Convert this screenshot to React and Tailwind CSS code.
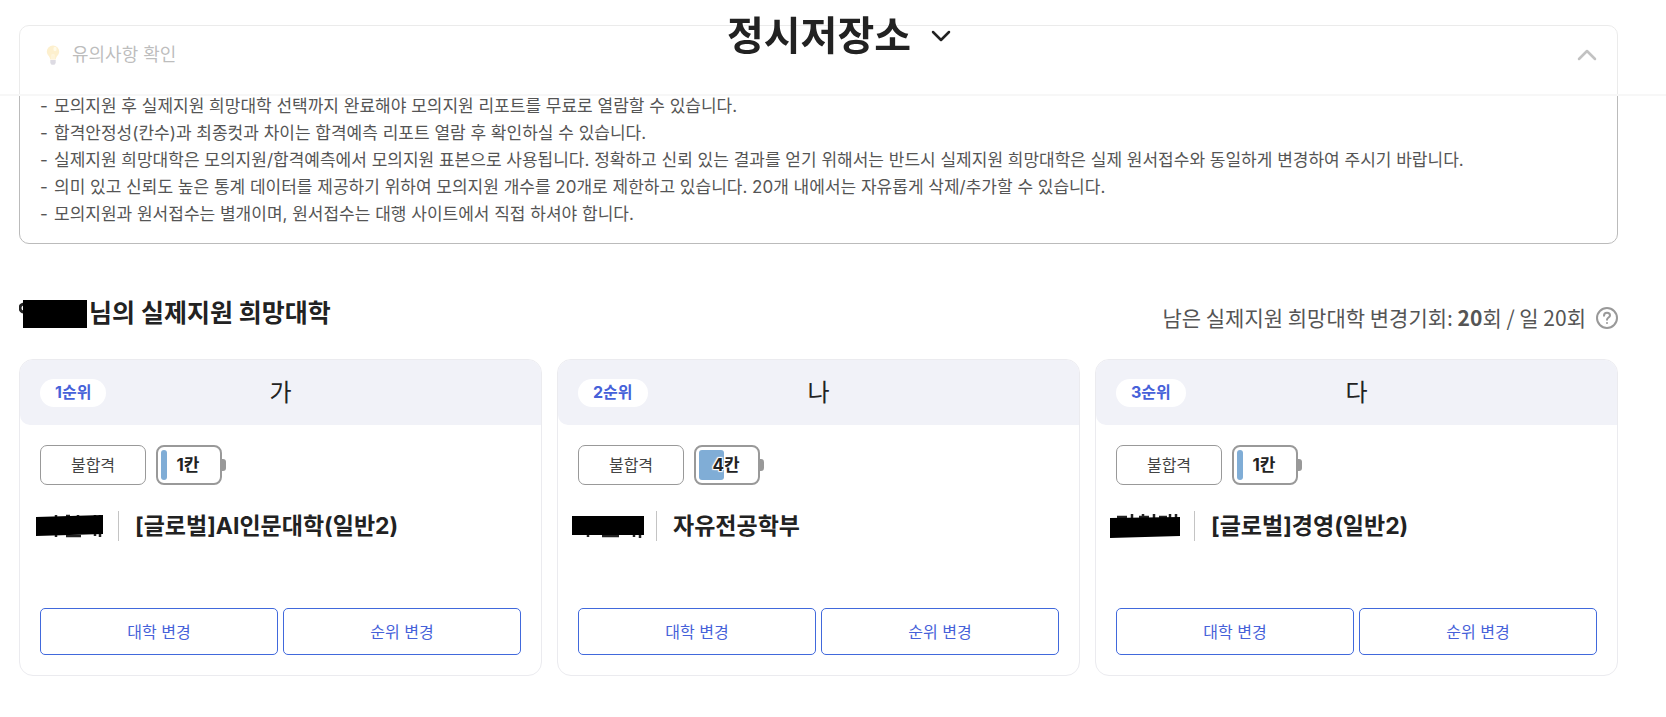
import { useState } from 'react'

const notices = [
  '모의지원 후 실제지원 희망대학 선택까지 완료해야 모의지원 리포트를 무료로 열람할 수 있습니다.',
  '합격안정성(칸수)과 최종컷과 차이는 합격예측 리포트 열람 후 확인하실 수 있습니다.',
  '실제지원 희망대학은 모의지원/합격예측에서 모의지원 표본으로 사용됩니다. 정확하고 신뢰 있는 결과를 얻기 위해서는 반드시 실제지원 희망대학은 실제 원서접수와 동일하게 변경하여 주시기 바랍니다.',
  '의미 있고 신뢰도 높은 통계 데이터를 제공하기 위하여 모의지원 개수를 20개로 제한하고 있습니다. 20개 내에서는 자유롭게 삭제/추가할 수 있습니다.',
  '모의지원과 원서접수는 별개이며, 원서접수는 대행 사이트에서 직접 하셔야 합니다.',
]

const choices = [
  {
    rank: 1,
    group: '가',
    result: '불합격',
    level: 1,
    fill: 6,
    major: '[글로벌]AI인문대학(일반2)',
    mask: '0,8 67,6 67,25 0,27',
    marks: 'M20 6v4M30 7h4M42 6v4M59 6v4M64 6v4M20 24v4M30 27h15M59 23v4M64 23v5',
  },
  {
    rank: 2,
    group: '나',
    result: '불합격',
    level: 4,
    fill: 25,
    major: '자유전공학부',
    mask: '-2,7 70,7 70,26 -2,26',
    marks: 'M14 25v3M28 27h17M60 25v3M66 25v4',
  },
  {
    rank: 3,
    group: '다',
    result: '불합격',
    level: 1,
    fill: 6,
    major: '[글로벌]경영(일반2)',
    mask: '-2,9 68,8 68,27 -2,29',
    marks: 'M5 8h10M20 5v5M27 8h10M31 5v3M42 5v5M47 8h8M58 5v5M64 5v5',
  },
]

function Bulb() {
  return (
    <svg viewBox="0 0 14 20" className="h-5 w-[14px]" aria-hidden="true">
      <path d="M7 0.500a6 6 0 0 0-6.200 6c0 3.400 3 4.600 3.400 8h5.600c.4-3.400 3.400-4.600 3.400-8a6 6 0 0 0-6.200-6z" fill="#f9cb5c" />
      <ellipse cx="9" cy="4" rx="1.600" ry="2.200" fill="#fff0b5" />
      <path d="M6 14V9.500l1 .8 1-.8V14" fill="none" stroke="#fde7a4" />
      <path d="M4.300 15h5.400v3L8.500 19.700h-3L4.300 18z" fill="#8d88a0" />
    </svg>
  )
}

function Chevron({ up, className }) {
  return (
    <svg viewBox="0 0 20 12" className={className} fill="none" stroke="currentColor" strokeLinecap="round" strokeLinejoin="round" aria-hidden="true">
      <path d={up ? 'M2 10l8-8 8 8' : 'M2 2l8 8 8-8'} />
    </svg>
  )
}

function Battery({ level, fill }) {
  return (
    <div className="flex items-center">
      <div className="relative flex h-10 w-[66px] items-center rounded-lg border-2 border-[#999] p-[3px]">
        <div className="h-[30px] rounded-[3px] bg-[#80add6]" style={{ width: fill }} />
        <span className="absolute inset-0 flex items-center justify-center pt-0.5 pr-0.5 text-[17px] font-bold text-[#222] [text-shadow:1px_1px_1px_#fff,-1px_-1px_1px_#fff,1px_-1px_1px_#fff,-1px_1px_1px_#fff]">
          {level}칸
        </span>
      </div>
      <div className="h-3 w-1 rounded-r-[3px] bg-[#999]" />
    </div>
  )
}

function ChoiceCard({ choice }) {
  return (
    <li className="overflow-hidden rounded-[14px] border border-[#ebebef] bg-white">
      <div className="grid h-[65px] grid-cols-[1fr_auto_1fr] items-center rounded-bl-[10px] bg-[#f1f2f8] px-5">
        <span className="flex h-7 items-center justify-self-start rounded-full bg-white px-[15px] pb-0.5 text-base font-bold text-[#4661d9]">
          {choice.rank}순위
        </span>
        <span className="text-2xl text-[#222]">{choice.group}</span>
      </div>
      <div className="px-5 py-5">
        <div className="flex items-center gap-[10px]">
          <span className="flex h-10 w-[106px] items-center justify-center rounded-[7px] border border-[#999] text-base text-[#444]">
            {choice.result}
          </span>
          <Battery level={choice.level} fill={choice.fill} />
        </div>
        <div className="mt-[26px] flex h-[30px] items-center">
          <svg viewBox="0 0 70 34" className="-ml-1 h-[34px] w-[70px] overflow-visible" aria-hidden="true">
            <path d={choice.marks} stroke="#222" strokeWidth="2.500" />
            <polygon points={choice.mask} fill="#000" />
          </svg>
          <span className="ml-3 h-[30px] w-px bg-[#c4c4c4]" />
          <strong className="ml-4 text-[23px] font-bold text-[#222]">{choice.major}</strong>
        </div>
        <div className="mt-[67px] grid grid-cols-2 gap-[5px]">
          <button type="button" className="h-[47px] rounded-[5px] border border-[#4169dc] text-base text-[#4661d9]">
            대학 변경
          </button>
          <button type="button" className="h-[47px] rounded-[5px] border border-[#4169dc] text-base text-[#4661d9]">
            순위 변경
          </button>
        </div>
      </div>
    </li>
  )
}

export default function App() {
  const [open, setOpen] = useState(true)

  return (
    <div className="min-h-screen bg-white font-['Inter','Noto_Sans_CJK_KR',sans-serif] text-[#222]">
      <header className="fixed inset-x-0 top-0 z-10 flex h-24 justify-center border-b-2 border-[#f7f7f7] bg-white/70 pt-2 pl-3">
        <button type="button" className="flex h-14 items-center gap-5">
          <h1 className="text-[40px] font-bold">정시저장소</h1>
          <Chevron className="h-3 w-5 stroke-[2.5]" />
        </button>
      </header>

      <main className="pt-[25px] pr-12 pl-[19px]">
        <section className="rounded-[10px] border border-[#bbb] pb-[15px]">
          <button
            type="button"
            aria-expanded={open}
            onClick={() => setOpen(!open)}
            className="flex h-[58px] w-full items-center pr-5 pl-[26px]"
          >
            <Bulb />
            <span className="ml-3 text-lg text-[#222]">유의사항 확인</span>
            <Chevron up={open} className="ml-auto h-3 w-5 stroke-[2.5] text-[#333]" />
          </button>
          {open && (
            <ul className="mt-[9px] px-5 text-[17px] leading-[27px] text-[#555]">
              {notices.map((notice) => (
                <li key={notice} className="flex">
                  <span className="w-[14px] shrink-0">-</span>
                  {notice}
                </li>
              ))}
            </ul>
          )}
        </section>

        <div className="mt-[50px] flex h-10 items-center justify-between">
          <h2 className="flex items-center text-[25px] font-bold">
            <svg viewBox="0 0 70 30" className="h-[30px] w-[70px]" aria-hidden="true">
              <circle cx="5" cy="9" r="4" fill="none" stroke="#222" strokeWidth="3" />
              <path d="M4 1h64v28H4z" fill="#000" />
            </svg>
            님의 실제지원 희망대학
          </h2>
          <div className="flex items-center gap-[10px] pt-2 text-[21px] text-[#555]">
            <p className="font-['Noto_Sans_CJK_KR',sans-serif]">
              남은 실제지원 희망대학 변경기회: <b>20</b>회 / 일 20회
            </p>
            <button type="button" aria-label="도움말">
              <svg viewBox="0 0 22 22" className="h-[22px] w-[22px]" fill="none" stroke="#999" strokeWidth="2" strokeLinecap="round">
                <circle cx="11" cy="11" r="10" />
                <path d="M8 8.700c0-1.700 1.300-2.900 3-2.900s3 1.100 3 2.600c0 2-3 2.200-3 4.300" />
                <path d="M11 15.900v.1" />
              </svg>
            </button>
          </div>
        </div>

        <ul className="mt-[25px] grid grid-cols-3 gap-[15px] pb-10">
          {choices.map((choice) => (
            <ChoiceCard key={choice.rank} choice={choice} />
          ))}
        </ul>
      </main>
    </div>
  )
}
